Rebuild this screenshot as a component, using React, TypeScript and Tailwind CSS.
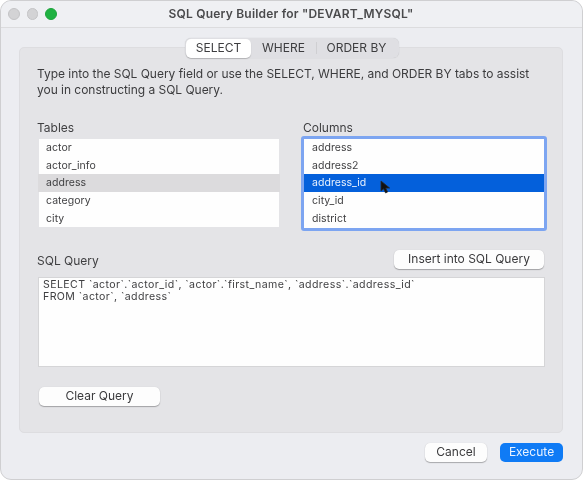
const font = "font-['Inter','Liberation_Sans',sans-serif]";

function ListRow({ label, kind, inset }: { label: string; kind?: "gray" | "blue"; inset?: boolean }) {
  const pad = inset ? "px-[8px]" : "px-[7px]";
  const tone =
    kind === "gray"
      ? "bg-[#dcdbdd] -mx-px pl-[8px]"
      : kind === "blue"
        ? `bg-[#0460db] text-[#e8f1fd] ${pad}`
        : pad;
  return <div className={`h-[17.7px] leading-[17px] text-[10.5px] tracking-[0.05px] ${tone}`}>{label}</div>;
}

function PushButton({ label, className }: { label: string; className: string }) {
  return (
    <button className={`h-[19px] rounded-[5px] bg-[#fdfdfd] text-[#3a3a3c] text-[12px] leading-[17px] pb-[2px] shadow-[0_1px_1px_rgba(0,0,0,0.28),0_0_1px_rgba(0,0,0,0.15)] ${className}`}>
      {label}
    </button>
  );
}

export default function App() {
  return (
    <div className={`${font} w-[583px] h-[480px] bg-white overflow-hidden text-[#3f3f41] blur-[0.35px]`}>
      <div className="w-full h-full rounded-[11px] bg-[#ecedf1] border border-[#cfcfd1] flex flex-col">
        <div className="h-[27px] shrink-0 bg-[#eff0f3] rounded-t-[11px] border-b border-[#dcdcde] flex items-center relative">
          <div className="flex gap-[7px] ml-[7px]">
            <span className="w-[11.5px] h-[11.5px] rounded-full bg-[#d3d3d5] border border-[#c4c4c6]" />
            <span className="w-[11.5px] h-[11.5px] rounded-full bg-[#d3d3d5] border border-[#c4c4c6]" />
            <span className="w-[11.5px] h-[11.5px] rounded-full bg-[#1fb141] border border-[#1da53c]" />
          </div>
          <div className="absolute inset-0 flex items-center justify-center pr-[1px] text-[12px] font-semibold text-[#4a4a4c] tracking-[0.2px]">
            SQL Query Builder for "DEVART_MYSQL"
          </div>
        </div>

        <div className="flex-1 relative flex flex-col pl-[18px] pr-[19px] pt-[19px]">
          <div className="absolute left-[184px] top-[10px] w-[214px] h-[20px] rounded-[6px] bg-[#dfdfe3] flex items-center text-[12px] text-[#3d3d3f] shadow-[0_0_1px_rgba(0,0,0,0.2)]">
            <div className="w-[65px] h-[19px] ml-px rounded-[5px] bg-white flex items-center justify-center shadow-[0_1px_1px_rgba(0,0,0,0.2)]">SELECT</div>
            <div className="w-[65px] text-center">WHERE</div>
            <div className="w-px h-[12px] bg-[#cfcfd2]" />
            <div className="flex-1 text-center pr-[3px]">ORDER BY</div>
          </div>

          <div className="h-[386px] shrink-0 rounded-[5px] bg-[#e4e4e7] border border-[#dddde0] pl-[17px] pr-[17px] pt-[18px]">
            <p className="text-[12px] leading-[15.5px] tracking-[-0.03px] text-[#3c3c3e] w-[510px]">
              Type into the SQL Query field or use the SELECT, WHERE, and ORDER BY tabs to assist you in constructing a SQL Query.
            </p>

            <div className="flex mt-[24px]">
              <div className="w-[243px] shrink-0">
                <div className="text-[12px] leading-[16px] -mt-px mb-[3px]">Tables</div>
                <div className="mt-[1px] ml-[2px] w-[240px] h-[88px] bg-[#fefefe] text-[#3f3f41]">
                  <ListRow label="actor" />
                  <ListRow label="actor_info" />
                  <ListRow label="address" kind="gray" />
                  <ListRow label="category" />
                  <ListRow label="city" />
                </div>
              </div>
              <div className="ml-[21px] w-[246px] shrink-0 -mt-px">
                <div className="text-[12px] leading-[16px] pl-[2px]">Columns</div>
                <div className="relative w-[246px] h-[95px] border-[3px] border-[#7da5f1] rounded-[3px] bg-[#fefefe]">
                  <ListRow label="address" inset />
                  <ListRow label="address2" inset />
                  <div className="relative">
                    <ListRow label="address_id" kind="blue" inset />
                    <svg className="absolute left-[76px] top-[6px]" width="13" height="15" viewBox="0 0 13 15">
                      <path d="M1 1 L1 11 L3.6 8.8 L5.6 13 L7.6 12 L5.7 8 L9.6 8 Z" fill="#111" stroke="#2a2a2a" strokeWidth="0.8" />
                    </svg>
                  </div>
                  <ListRow label="city_id" inset />
                  <ListRow label="district" inset />
                </div>
              </div>
            </div>

            <div className="flex items-end justify-between mt-[19px] pr-[1px]">
              <div className="text-[12px] leading-[16px]">SQL Query</div>
              <PushButton label="Insert into SQL Query" className="w-[150px]" />
            </div>

            <div className="mt-[8px] ml-px w-[507px] h-[90px] bg-[#fefefe] border border-[#d5d5d7] px-[4px] pt-[1px] text-[10.6px] leading-[12.4px] text-[#3f3f41] tracking-[0.4px] whitespace-pre">
              {"SELECT `actor`.`actor_id`, `actor`.`first_name`, `address`.`address_id`\nFROM `actor`, `address`"}
            </div>

            <PushButton label="Clear Query" className="block w-[121px] mt-[20px] ml-[2px]" />
          </div>

          <div className="flex justify-end gap-[13px] mt-[10px]">
            <PushButton label="Cancel" className="w-[62px]" />
            <button className="w-[63px] h-[19px] rounded-[5px] bg-[#0f7bf5] text-[#eaf3ff] text-[12px] leading-[17px] pb-[2px]">Execute</button>
          </div>
        </div>
      </div>
    </div>
  );
}
